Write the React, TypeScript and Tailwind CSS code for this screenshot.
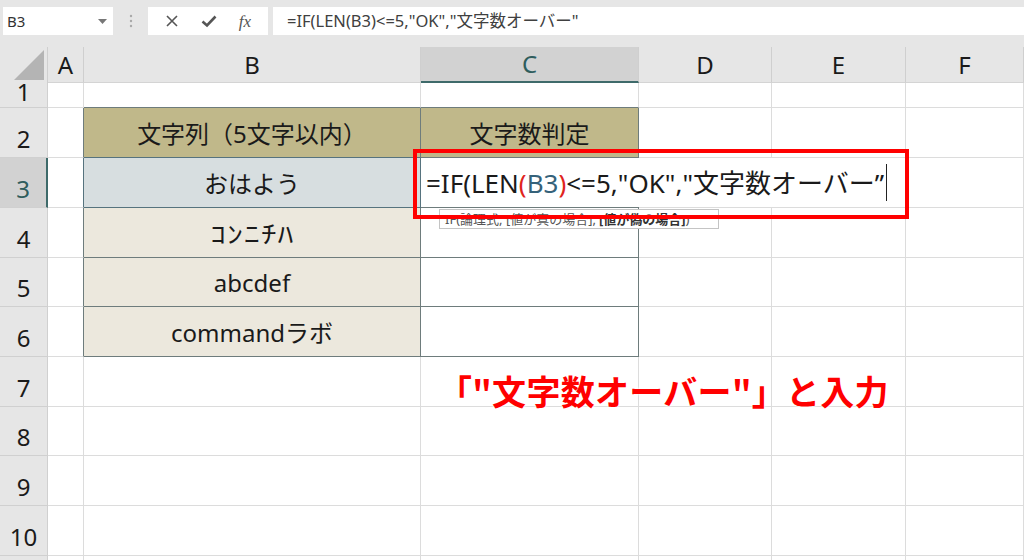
import React from "react";

const COLS = [
  { key: "A", w: "w-[36px]" },
  { key: "B", w: "w-[337px]" },
  { key: "C", w: "w-[218px]" },
  { key: "D", w: "w-[133px]" },
  { key: "E", w: "w-[134px]" },
  { key: "F", w: "flex-1" },
];

const ROWS = [
  { n: 1, h: "h-[25px]" },
  { n: 2, h: "h-[50px]" },
  { n: 3, h: "h-[50px]" },
  { n: 4, h: "h-[50px]" },
  { n: 5, h: "h-[49px]" },
  { n: 6, h: "h-[50px]" },
  { n: 7, h: "h-[50px]" },
  { n: 8, h: "h-[49px]" },
  { n: 9, h: "h-[50px]" },
  { n: 10, h: "h-[50px]" },
  { n: 11, h: "h-[20px]" },
];

const CELLFONT = "font-['Noto_Sans','Noto_Sans_CJK_JP',sans-serif]";

function cellClass(r: number, c: string): string {
  const inTable = r >= 2 && r <= 6;
  if (c === "A") {
    if (r === 3) return "border-r border-b border-r-[#56737e] border-b-[#dcdcdc]";
    if (inTable) return "border-r border-b border-r-[#6e7c7c] border-b-[#dcdcdc]";
    return "border-r border-b border-[#dcdcdc]";
  }
  if (c === "B" || c === "C") {
    if (r === 1) return "border-r border-b border-r-[#dcdcdc] border-b-[#6e7c7c]";
    if (r === 2 && c === "B") return "border-r border-b border-r-[#6e7c7c] border-b-[#56737e] bg-[#c0b88a]";
    if (r === 2) return "border-r border-b border-[#6e7c7c] bg-[#c0b88a]";
    if (r === 3 && c === "B") return "border-r border-b border-[#56737e] bg-[#d7dee0]";
    if (r === 3) return "border-r border-b border-[#6e7c7c] bg-white";
    if (inTable && c === "B") return "border-r border-b border-[#6e7c7c] bg-[#ece8dd]";
    if (inTable) return "border-r border-b border-[#6e7c7c] bg-white";
  }
  return "border-r border-b border-[#dcdcdc]";
}

function cellText(r: number, c: string): React.ReactNode {
  if (c === "B") {
    if (r === 2) return "文字列（5文字以内）";
    if (r === 3) return "おはよう";
    if (r === 4) return <span className="inline-block scale-x-[1.3] tracking-[1px]">ｺﾝﾆﾁﾊ</span>;
    if (r === 5) return "abcdef";
    if (r === 6) return "commandラボ";
  }
  if (c === "C" && r === 2) return "文字数判定";
  return null;
}

export default function App() {
  return (
    <div className="relative w-[1024px] h-[560px] overflow-hidden bg-white text-[#1a1a1a] font-['Noto_Sans','Noto_Sans_CJK_JP',sans-serif]">
      {/* Formula bar */}
      <div className="flex h-[47px] items-start bg-[#e6e6e6] pt-[7px]">
        <div className="ml-[3px] flex h-[28px] w-[110px] items-center justify-between bg-white pl-[4px] pr-[6px] text-[15px] text-[#333]">
          <span>B3</span>
          <svg width="9" height="5" viewBox="0 0 9 5">
            <polygon points="0,0 9,0 4.5,5" fill="#777" />
          </svg>
        </div>
        <div className="flex h-[28px] w-[35px] items-center justify-center">
          <svg width="4" height="14" viewBox="0 0 4 14">
            <circle cx="2" cy="2" r="1.2" fill="#a8a8a8" />
            <circle cx="2" cy="7" r="1.2" fill="#a8a8a8" />
            <circle cx="2" cy="12" r="1.2" fill="#a8a8a8" />
          </svg>
        </div>
        <div className="flex h-[28px] w-[120px] items-center justify-around bg-white px-[6px] text-[#555]">
          <svg width="14" height="14" viewBox="0 0 14 14">
            <path d="M2 2 L12 12 M12 2 L2 12" stroke="#555" strokeWidth="1.6" />
          </svg>
          <svg width="16" height="14" viewBox="0 0 16 14">
            <path d="M1.5 7.5 L6 11.5 L14.5 2.5" stroke="#555" strokeWidth="2.6" fill="none" />
          </svg>
          <span className="font-['Liberation_Serif',serif] text-[17px] italic leading-none">fx</span>
        </div>
        <div className="ml-[5px] flex h-[28px] flex-1 items-center bg-white pl-[14px] text-[16.5px] text-[#404040]">
          =IF(LEN(B3)&lt;=5,"OK","文字数オーバー"
        </div>
      </div>

      {/* Column headers */}
      <div className="flex h-[36px] bg-[#e6e6e6] text-[24px] leading-none">
        <div className="flex w-[48px] items-end justify-end border-r border-[#cfcfcf] pb-[3px] pr-[3px]">
          <svg width="30" height="30" viewBox="0 0 30 30">
            <polygon points="30,0 30,30 0,30" fill="#b4b4b4" />
          </svg>
        </div>
        {COLS.map((col) =>
          col.key === "C" ? (
            <div
              key={col.key}
              className={`${col.w} flex items-center justify-center border-r border-b-2 border-r-[#cfcfcf] border-b-[#3e6a6a] bg-[#d2d2d2] text-[#2f5d5d]`}
            >
              {col.key}
            </div>
          ) : (
            <div
              key={col.key}
              className={`${col.w} flex items-center justify-center border-r border-b border-r-[#cfcfcf] border-b-[#d4d4d4]`}
            >
              {col.key}
            </div>
          )
        )}
      </div>

      {/* Rows */}
      {ROWS.map((row) => (
        <div key={row.n} className={`flex ${row.h}`}>
          {row.n === 3 ? (
            <div className="flex w-[48px] items-end justify-center overflow-hidden border-r-2 border-b border-r-[#3e6a6a] border-b-[#d0d0d0] bg-[#d2d2d2] pb-[6px] text-[24px] leading-none text-[#2f5d5d]">
              {row.n}
            </div>
          ) : row.n === 1 ? (
            <div className="flex w-[48px] items-end justify-center overflow-hidden border-r border-b border-[#d0d0d0] bg-[#e6e6e6] pb-[3px] text-[24px] leading-none">
              {row.n}
            </div>
          ) : row.n === 11 ? (
            <div className="w-[48px] border-r border-[#d0d0d0] bg-[#e6e6e6]" />
          ) : (
            <div className="flex w-[48px] items-end justify-center overflow-hidden border-r border-b border-[#d0d0d0] bg-[#e6e6e6] pb-[6px] text-[24px] leading-none">
              {row.n}
            </div>
          )}
          {COLS.map((col) => (
            <div
              key={col.key}
              className={`${col.w} ${cellClass(row.n, col.key)} ${CELLFONT} flex items-center justify-center overflow-hidden whitespace-nowrap pt-[2px] text-[24px] leading-none text-[#1a1a1a]`}
            >
              {cellText(row.n, col.key)}
            </div>
          ))}
        </div>
      ))}

      {/* In-cell editor for C3 */}
      <div className={`absolute left-[421px] top-[158px] z-10 flex h-[49px] w-[486px] items-center bg-white pl-[5px] text-[26px] leading-none text-[#1a1a1a] ${CELLFONT} whitespace-nowrap`}>
        <span>=IF(LEN</span>
        <span className="text-[#e0241c]">(</span>
        <span className="text-[#35627a]">B3</span>
        <span className="text-[#e0241c]">)</span>
        <span>&lt;=5,"OK","文字数オーバー”</span>
        <span className="ml-[2px] h-[37px] w-[1px] bg-[#222]" />
      </div>

      {/* Function tooltip */}
      <div className={`absolute left-[439px] top-[209px] z-20 flex h-[20px] w-[280px] items-center border border-[#c4c4c4] bg-white pl-[5px] text-[13px] leading-none text-[#555] ${CELLFONT} whitespace-nowrap`}>
        IF(論理式, [値が真の場合], <span className="ml-[3px] font-bold text-[#333]">[値が偽の場合]</span>)
      </div>

      {/* Red highlight box */}
      <div className="absolute left-[413px] top-[149px] z-30 h-[70px] w-[496px] border-4 border-[#ff0000]" />

      {/* Annotation */}
      <div className={`absolute left-[438px] top-[374px] z-20 whitespace-nowrap text-[34px] font-bold leading-none tracking-[0.3px] text-[#ff0000] [text-shadow:0_0_3px_white,0_0_3px_white] font-['Noto_Sans_CJK_JP',sans-serif]`}>
        「"文字数オーバー"」と入力
      </div>
    </div>
  );
}
